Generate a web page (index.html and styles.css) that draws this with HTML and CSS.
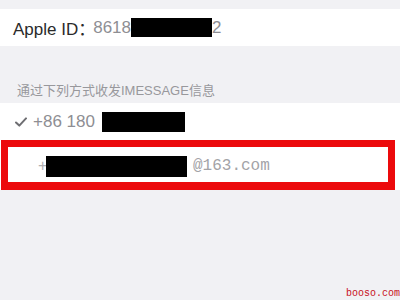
FILE: index.html
```html
<!DOCTYPE html>
<html>
<head>
<meta charset="utf-8">
<link rel="stylesheet" href="styles.css">
</head>
<body>
<div class="page">
  <div class="group group-top">
    <div class="row row-id">
      <span class="label">Apple ID：</span>
      <span class="value">8618</span><span class="mask mask-id"></span><span class="value">2</span>
    </div>
  </div>
  <div class="section-header">通过下列方式收发IMESSAGE信息</div>
  <div class="group">
    <div class="row row-phone">
      <svg class="check" width="12" height="10" viewBox="0 0 12 10"><path d="M1 5.5 L4.3 8.6 L11 1.4" fill="none" stroke="#6e6e72" stroke-width="2" stroke-linecap="round" stroke-linejoin="round"/></svg>
      <span class="value">+86 180</span>
      <span class="mask mask-phone"></span>
    </div>
    <div class="row row-mail">
      <span class="plus">+</span><span class="mask mask-mail"></span><span class="mail">@163.com</span>
    </div>
  </div>
  <div class="watermark">booso.com</div>
</div>
</body>
</html>
```

FILE: styles.css
```css
* { box-sizing: border-box; }
html, body { margin: 0; padding: 0; }
body {
  width: 400px;
  height: 300px;
  overflow: hidden;
  background: #f1f1f4;
  font-family: "Liberation Sans", "Noto Sans CJK SC", sans-serif;
}
.page {
  position: relative;
  width: 400px;
  height: 300px;
  padding-top: 9px;
}
.group {
  background: #fff;
}
.row {
  display: flex;
  align-items: center;
  font-size: 17px;
}
.row-id {
  height: 37px;
  padding-left: 13px;
}
.label { color: #2a2a2a; margin-right: -2px; }
.value { color: #8e8e93; }
.mask {
  display: inline-block;
  background: #000;
}
.mask-id { width: 81px; height: 19px; }
.section-header {
  height: 57px;
  padding: 34px 0 0 17px;
  font-size: 13px;
  color: #98989c;
}
.row-phone {
  height: 37px;
  padding-left: 15px;
}
.check {
  display: block;
  margin-right: 6px;
}
.mask-phone { width: 83px; height: 20px; margin-left: 7px; }
.row-mail {
  height: 50px;
  margin: 0 5px 0 1px;
  border: 7px solid #ec0a0c;
  border-bottom-width: 8px;
  padding: 3px 0 0 30px;
}
.plus { color: #b0b0b4; font-size: 16px; width: 8px; }
.mask-mail { width: 141px; height: 21px; }
.mail {
  font-family: "Liberation Mono", monospace;
  font-size: 16px;
  color: #a3a3a7;
  margin-left: 6px;
}
.watermark {
  position: absolute;
  right: 0;
  bottom: 1px;
  font-family: "Liberation Mono", monospace;
  font-size: 10px;
  color: #c8101c;
}
```
